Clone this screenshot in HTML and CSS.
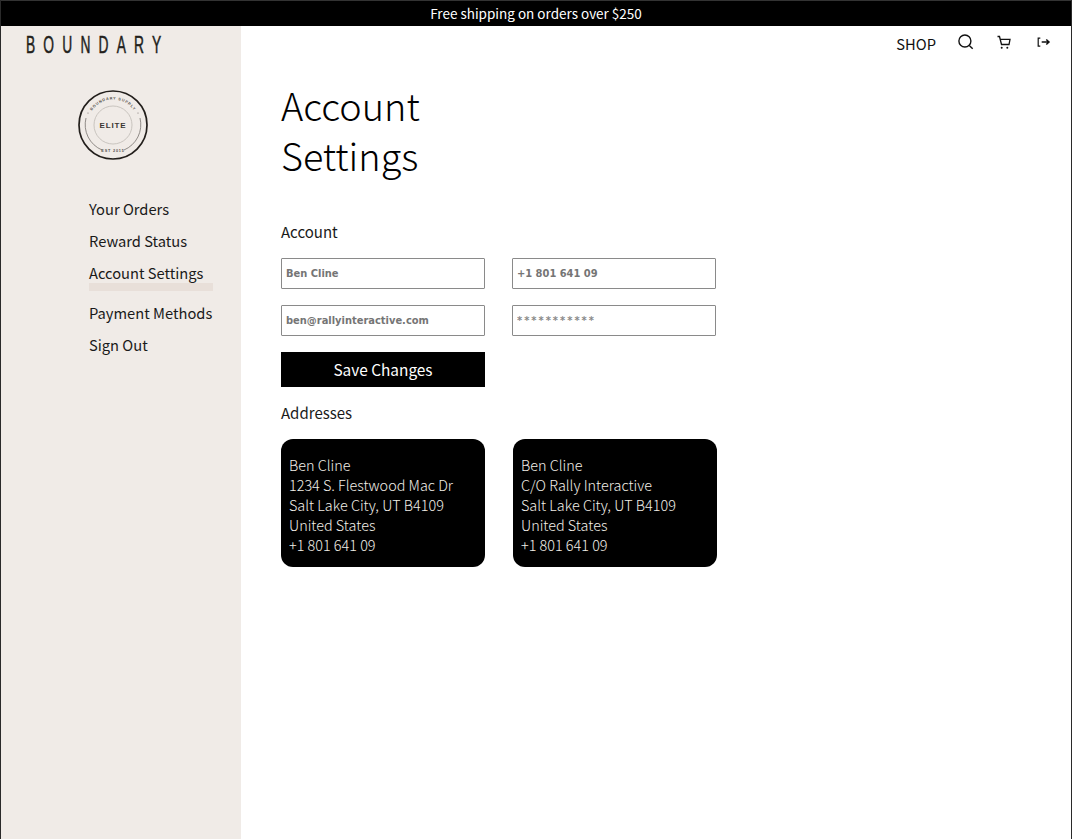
FILE: index.html
```html
<!DOCTYPE html>
<html lang="en">
<head>
<meta charset="utf-8">
<title>Account Settings</title>
<link rel="stylesheet" href="styles.css">
</head>
<body>
<div class="window">
  <div class="promo">Free shipping on orders over $250</div>
  <div class="layout">
    <aside class="sidebar">
      <div class="wordmark">BOUNDARY</div>
      <svg class="badge" viewBox="0 0 72 72" width="72" height="72" aria-label="Boundary Supply Elite badge">
        <defs>
          <path id="arcTop" d="M10.500 36a25.500 25.500 0 0 1 51 0"/>
        </defs>
        <circle cx="36" cy="36" r="34" fill="none" stroke="#231f1c" stroke-width="1.700"/>
        <circle cx="36" cy="36" r="19" fill="none" stroke="#c4bfba" stroke-width="0.900"/>
        <path d="M9 29a27.500 27.500 0 0 0 16 32M63 29a27.500 27.500 0 0 1-16 32" fill="none" stroke="#77726e" stroke-width="0.800"/>
        <circle cx="11" cy="24" r=".6" fill="#77726e"/>
        <circle cx="61" cy="24" r=".6" fill="#77726e"/>
        <text class="badge-elite" x="36" y="39" text-anchor="middle">ELITE</text>
        <text class="badge-small"><textPath href="#arcTop" startOffset="50%" text-anchor="middle">BOUNDARY SUPPLY</textPath></text>
        <text class="badge-small" x="36" y="63" text-anchor="middle">EST 2015</text>
      </svg>
      <nav class="side-nav">
        <a class="side-link">Your Orders</a>
        <a class="side-link">Reward Status</a>
        <a class="side-link is-active">Account Settings</a>
        <a class="side-link">Payment Methods</a>
        <a class="side-link">Sign Out</a>
      </nav>
    </aside>
    <main class="content">
      <header class="top-actions">
        <span class="shop">SHOP</span>
        <svg class="icon" viewBox="0 0 16 16" width="16" height="16"><circle cx="6.900" cy="7" r="6" fill="none" stroke="#111" stroke-width="1.400"/><path d="M11.300 11.400l3.400 3.300" stroke="#111" stroke-width="1.400" fill="none"/></svg>
        <svg class="icon icon-cart" viewBox="0 0 16 16" width="16" height="16"><path d="M1.500 1.500h2l2 8h7.500l1-5.200H4.500" fill="none" stroke="#111" stroke-width="1.300"/><circle cx="5.700" cy="12.700" r="1" fill="#111"/><circle cx="11.300" cy="12.700" r="1" fill="#111"/></svg>
        <svg class="icon icon-exit" viewBox="0 0 16 16" width="16" height="16"><path d="M4.300 4.200H2.200v8h2.100" fill="none" stroke="#111" stroke-width="1.200"/><path d="M5.700 8h7M10.300 5.500L13 8l-2.700 2.500" fill="none" stroke="#111" stroke-width="1.500"/></svg>
      </header>
      <h1 class="title">Account<br>Settings</h1>
      <h2 class="section first">Account</h2>
      <form class="form-grid">
        <input class="field" type="text" value="Ben Cline">
        <input class="field" type="text" value="+1 801 641 09">
        <input class="field" type="text" value="ben@rallyinteractive.com">
        <input class="field field-pass" type="password" value="" placeholder="***********">
        <button class="save" type="button">Save Changes</button>
      </form>
      <h2 class="section">Addresses</h2>
      <div class="cards">
        <div class="card">Ben Cline<br>1234 S. Flestwood Mac Dr<br>Salt Lake City, UT B4109<br>United States<br>+1 801 641 09</div>
        <div class="card">Ben Cline<br>C/O Rally Interactive<br>Salt Lake City, UT B4109<br>United States<br>+1 801 641 09</div>
      </div>
    </main>
  </div>
</div>
</body>
</html>
```
FILE: styles.css
```css
* { box-sizing: border-box; }
html, body { margin: 0; height: 100%; }
body {
  font-family: "Noto Sans CJK SC", "Noto Sans", sans-serif;
  color: #111;
  background: #fff;
}
.window {
  height: 839px;
  overflow: hidden;
  display: flex;
  flex-direction: column;
  border-left: 1px solid #2a2a2a;
  border-right: 1px solid #2a2a2a;
}
.promo {
  height: 26px;
  flex: none;
  background: #000;
  border-top: 1px solid #333;
  color: #fff;
  font-size: 13.500px;
  line-height: 25px;
  text-align: center;
}
.layout { flex: 1; display: flex; }
.sidebar {
  width: 240px;
  flex: none;
  background: #f0ebe7;
  padding: 7px 0 0 24.500px;
}
.wordmark {
  font-family: "Liberation Sans", sans-serif;
  font-size: 23px;
  line-height: 24px;
  letter-spacing: 13.600px;
  -webkit-text-stroke: .5px #231f1c;
  color: #231f1c;
  white-space: nowrap;
  transform: scaleX(.6);
  transform-origin: left center;
}
.badge { display: block; margin: 32px 0 0 51px; }
.badge-elite { font-family: "Liberation Sans", sans-serif; font-size: 8px; font-weight: 700; letter-spacing: .9px; fill: #3a3633; }
.badge-small { font-family: "Liberation Sans", sans-serif; font-size: 3.800px; letter-spacing: .8px; font-weight: 700; fill: #55504c; }
.side-nav { display: flex; flex-direction: column; margin: 36px 0 0 63.500px; align-items: flex-start; }
.side-link {
  font-size: 14.700px;
  line-height: 24px;
  margin-bottom: 8px;
  color: #1a1a1a;
  white-space: nowrap;
}
.side-link.is-active {
  width: 124px;
  height: 30px;
  margin-bottom: 10px;
  border-bottom: 8px solid #e8dfd9;
}
.content { flex: 1; padding: 0 0 0 40px; }
.top-actions {
  display: flex;
  justify-content: flex-end;
  align-items: flex-start;
  gap: 22px;
  height: 36px;
  padding: 8px 19px 0 0;
}
.shop { font-size: 14.700px; line-height: 20px; }
.icon { display: block; }
.icon-cart { margin-top: 1px; }
.icon-exit { margin-left: 2px; }
.title {
  margin: 18px 0 0;
  font-size: 37.800px;
  font-weight: 300;
  line-height: 50px;
  color: #000;
}
.section { margin: 0; font-size: 15px; font-weight: 400; line-height: 24px; color: #1a1a1a; }
.section.first { margin-top: 40px; }
.form-grid {
  display: grid;
  grid-template-columns: 204px 204px;
  column-gap: 27px;
  row-gap: 16px;
  margin: 14px 0 14px;
}
.field {
  height: 31px;
  width: 204px;
  border: 1px solid #8a8a8a;
  border-radius: 1px;
  padding: 0 4px;
  background: #fff;
  font-family: "DejaVu Sans Condensed", "DejaVu Sans", sans-serif;
  font-stretch: condensed;
  font-size: 11px;
  font-weight: 700;
  color: #757575;
  outline: none;
}
.field-pass::placeholder { color: #888; font-weight: 700; letter-spacing: 2px; }
.save {
  height: 35px;
  width: 204px;
  border: 0;
  background: #000;
  color: #fff;
  font-family: inherit;
  font-size: 15.400px;
  padding: 0 0 2px;
}
.cards { display: grid; grid-template-columns: 204px 204px; column-gap: 28px; margin-top: 14px; }
.card {
  height: 128px;
  background: #000;
  border-radius: 12px;
  color: #f2efe8;
  font-size: 14.400px;
  font-weight: 300;
  line-height: 20px;
  padding: 16px 8px 0;
}
```
